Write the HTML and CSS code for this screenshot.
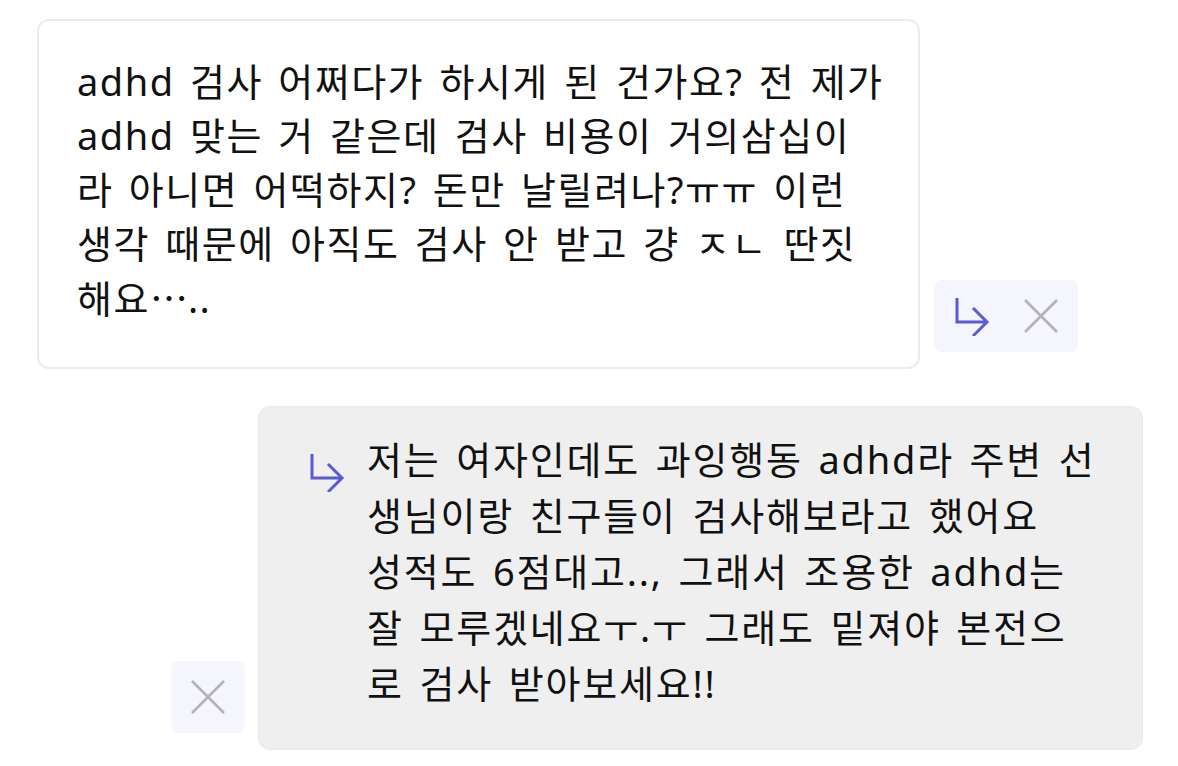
FILE: index.html
```html
<!DOCTYPE html>
<html lang="ko">
<head>
<meta charset="utf-8">
<link rel="stylesheet" href="styles.css">
</head>
<body>
<main class="thread">
  <div class="row row-left">
    <div class="card card-main">
      <p class="msg msg-main">adhd 검사 어쩌다가 하시게 된 건가요? 전 제가<br>adhd 맞는 거 같은데 검사 비용이 거의삼십이<br>라 아니면 어떡하지? 돈만 날릴려나?ㅠㅠ 이런<br>생각 때문에 아직도 검사 안 받고 걍 ㅈㄴ 딴짓<br>해요<span class="ell">⋯</span>..</p>
    </div>
    <div class="actions actions-wide">
      <button class="icon-btn" aria-label="reply">
        <svg class="ic-reply" viewBox="0 0 36 40" width="36" height="40"><path d="M3 2 V26 H33 M19 12 L33 26 L19 40" fill="none" stroke="currentColor" stroke-width="3" stroke-linejoin="miter"/></svg>
      </button>
      <button class="icon-btn" aria-label="close">
        <svg class="ic-close" viewBox="0 0 34 34" width="34" height="34"><path d="M1 1 L33 33 M33 1 L1 33" fill="none" stroke="currentColor" stroke-width="2.6"/></svg>
      </button>
    </div>
  </div>
  <div class="row row-right">
    <div class="actions">
      <button class="icon-btn" aria-label="close">
        <svg class="ic-close" viewBox="0 0 34 34" width="34" height="34"><path d="M1 1 L33 33 M33 1 L1 33" fill="none" stroke="currentColor" stroke-width="2.6"/></svg>
      </button>
    </div>
    <div class="card card-reply">
      <svg class="ic-reply reply-mark" viewBox="0 0 36 40" width="36" height="40"><path d="M3 2 V26 H33 M19 12 L33 26 L19 40" fill="none" stroke="currentColor" stroke-width="3"/></svg>
      <p class="msg msg-reply">저는 여자인데도 과잉행동 adhd라 주변 선<br>생님이랑 친구들이 검사해보라고 했어요<br>성적도 6점대고.., 그래서 조용한 adhd는<br>잘 모루겠네요ㅜ.ㅜ 그래도 밑져야 본전으<br>로 검사 받아보세요!!</p>
    </div>
  </div>
</main>
</body>
</html>
```

FILE: styles.css
```css
* { box-sizing: border-box; }
html, body { margin: 0; padding: 0; background: #ffffff; }
body {
  font-family: "Noto Sans", "Noto Sans CJK KR", sans-serif;
  color: #111111;
}
.thread {
  display: flex;
  flex-direction: column;
  gap: 37px;
  padding: 19px 35px 0 37px;
}
.row {
  display: flex;
  align-items: flex-end;
}
.row-left { justify-content: flex-start; gap: 14px; }
.row-right { justify-content: flex-end; gap: 13px; }
.card {
  border-radius: 12px;
}
.card-main {
  width: 883px;
  height: 350px;
  background: #ffffff;
  border: 2px solid #ebebeb;
  padding: 33px 10px 0 38px;
}
.card-reply {
  width: 885px;
  height: 344px;
  background: #efefef;
  border: 1px solid #e9e9e9;
  display: flex;
  align-items: flex-start;
  gap: 22px;
  padding: 24px 10px 0 50px;
}
.msg {
  margin: 0;
  font-size: 38px;
  white-space: nowrap;
  letter-spacing: 1.5px;
  word-spacing: 4px;
}
.msg-main { line-height: 54px; }
.msg-reply { line-height: 56px; letter-spacing: 1.8px; }
.ell { font-family: "Noto Sans CJK KR", sans-serif; letter-spacing: 0; }
.reply-mark { color: #5b5bd6; flex: none; margin-top: 21px; }
.actions {
  display: flex;
  align-items: center;
  background: #f5f5fd;
  border-radius: 8px;
  height: 72px;
  margin-bottom: 17px;
  padding: 0 20px;
  gap: 34px;
}
.actions-wide { width: 144px; padding: 0 20px 0 20px; }
.icon-btn {
  border: 0;
  background: none;
  padding: 0;
  display: flex;
  align-items: center;
  justify-content: center;
  cursor: pointer;
}
.ic-reply { color: #5b5bd6; display: block; }
.ic-close { color: #b3b3b3; display: block; }
```
